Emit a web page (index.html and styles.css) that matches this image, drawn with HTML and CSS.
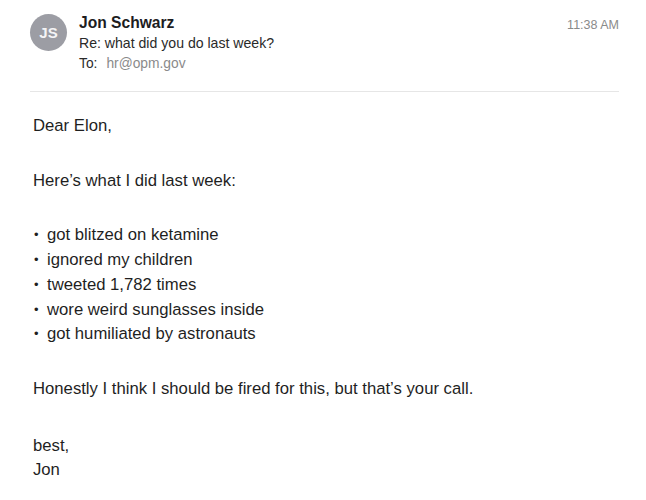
FILE: index.html
```html
<!DOCTYPE html>
<html>
<head>
<meta charset="utf-8">
<link rel="stylesheet" href="styles.css">
</head>
<body>
<div class="mail">
  <header class="head">
    <div class="avatar">JS</div>
    <div class="meta">
      <div class="from">Jon Schwarz</div>
      <div class="subject">Re: what did you do last week?</div>
      <div class="to"><span class="to-label">To:</span><span class="to-addr">hr@opm.gov</span></div>
    </div>
    <div class="time">11:38 AM</div>
  </header>
  <div class="body">
    <p>Dear Elon,</p>
    <p>Here’s what I did last week:</p>
    <ul class="list">
      <li>got blitzed on ketamine</li>
      <li>ignored my children</li>
      <li>tweeted 1,782 times</li>
      <li>wore weird sunglasses inside</li>
      <li>got humiliated by astronauts</li>
    </ul>
    <p class="closing">Honestly I think I should be fired for this, but that’s your call.</p>
    <p>best,<br>Jon</p>
  </div>
</div>
</body>
</html>
```
FILE: styles.css
```css
html, body {
  margin: 0;
  padding: 0;
  background: #fff;
}
body {
  font-family: "Liberation Sans", Arial, sans-serif;
  color: #1f1f1f;
}
.mail {
  width: 646px;
  height: 500px;
  box-sizing: border-box;
  padding: 0 27px 0 30px;
}
.head {
  display: flex;
  align-items: flex-start;
  padding-top: 13px;
  padding-bottom: 17px;
  border-bottom: 1px solid #e6e6e6;
}
.avatar {
  width: 37px;
  height: 37px;
  border-radius: 50%;
  background: #9c9da4;
  color: #f4f4f6;
  font-weight: bold;
  font-size: 15px;
  display: flex;
  align-items: center;
  justify-content: center;
  margin-top: 1px;
  flex: none;
}
.meta {
  margin-left: 12px;
  flex: 1;
}
.from {
  font-weight: bold;
  font-size: 15.6px;
  line-height: 20px;
  color: #1d1d1f;
}
.subject {
  font-size: 14.1px;
  line-height: 21px;
  color: #2a2a2a;
}
.to {
  font-size: 13.8px;
  line-height: 20px;
  color: #2a2a2a;
}
.to-label {
  margin-right: 9px;
}
.to-addr {
  color: #8a8a8a;
}
.time {
  font-size: 12.5px;
  color: #8a8a8a;
  line-height: 20px;
  padding-top: 2px;
}
.body {
  padding-left: 3px;
  padding-top: 22px;
  font-size: 16.7px;
  line-height: 24.7px;
}
.body p {
  margin: 0 0 30px 0;
}
.body .closing {
  margin-bottom: 32px;
}
.list {
  list-style: none;
  margin: 0 0 30px 0;
  padding: 0;
}
.list li::before {
  content: "•";
  display: inline-block;
  font-size: 13px;
  width: 13px;
  margin-left: 1px;
  vertical-align: 1px;
}
```
